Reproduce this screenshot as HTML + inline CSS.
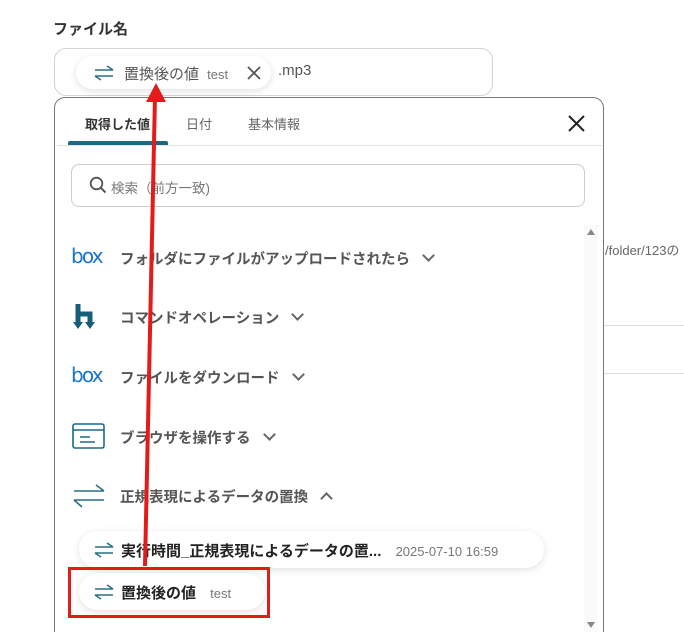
<html><head><style>
html,body{margin:0;width:684px;height:632px;overflow:hidden}
body{background:#fff;font-family:"Liberation Sans","Noto Sans CJK JP",sans-serif;position:relative}
.a{position:absolute}
.t{color:#555;font-size:14.5px;font-weight:bold;white-space:nowrap}
.chev{display:inline-block;width:7px;height:7px;border-right:2px solid #666;border-bottom:2px solid #666;transform:rotate(45deg);margin-left:14px;position:relative;top:-4px}
.chip{background:#fff;border-radius:20px;box-shadow:0 2px 8px rgba(0,0,0,.12)}
.box{font-size:20px;color:#1a76c8;letter-spacing:-1.8px;font-family:"DejaVu Sans",sans-serif}
</style></head><body>
<div class="a" style="left:53px;top:18px;font-size:15px;font-weight:bold;color:#333">ファイル名</div>
<div class="a" style="left:54px;top:48px;width:439px;height:48px;border:1px solid #d4d4d8;border-radius:12px;box-sizing:border-box"></div>
<div class="a chip" style="left:76px;top:56px;width:195px;height:33px"></div>
<svg class="a" style="left:93px;top:65px" width="22" height="16"><path d="M2 5H20M14 1L20 5M20 11H2M8 15L2 11" stroke="#2a6f86" stroke-width="1.5" fill="none"/></svg>
<div class="a" style="left:124px;top:63px;font-size:15px;color:#555">置換後の値 <span style="font-size:13px;color:#777;margin-left:4px">test</span></div>
<svg class="a" style="left:247px;top:66px" width="14" height="14"><path d="M1 1L13 13M13 1L1 13" stroke="#555" stroke-width="1.8"/></svg>
<div class="a" style="left:278px;top:62px;font-size:15px;color:#555">.mp3</div>

<div class="a" style="left:605px;top:240px;font-size:13px;color:#666;white-space:nowrap">/folder/123の</div>
<div class="a" style="left:604px;top:325px;width:80px;height:1px;background:#ddd"></div>
<div class="a" style="left:604px;top:373px;width:80px;height:1px;background:#ddd"></div>

<div class="a" style="left:54px;top:97px;width:550px;height:545px;border:1px solid #777;border-radius:11px;box-sizing:border-box;background:#fff"></div>
<div class="a" style="left:85px;top:114px;font-size:13px;font-weight:bold;color:#333">取得した値</div>
<div class="a" style="left:186px;top:114px;font-size:13px;color:#666">日付</div>
<div class="a" style="left:248px;top:114px;font-size:13px;color:#666">基本情報</div>
<div class="a" style="left:68px;top:141px;width:100px;height:4px;background:#1b6a83;border-radius:2px 2px 0 0"></div>
<div class="a" style="left:57px;top:145px;width:545px;height:1px;background:#e3e3e3"></div>
<svg class="a" style="left:568px;top:115px" width="17" height="17"><path d="M1 1L16 16M16 1L1 16" stroke="#222" stroke-width="2"/></svg>
<div class="a" style="left:71px;top:164px;width:514px;height:43px;border:1px solid #ccc;border-radius:8px;box-sizing:border-box"></div>
<svg class="a" style="left:89px;top:176px" width="18" height="18"><circle cx="7.5" cy="7.5" r="5.8" stroke="#555" stroke-width="1.8" fill="none"/><path d="M12 12L16.5 16.5" stroke="#555" stroke-width="2"/></svg>
<div class="a" style="left:111px;top:177px;font-size:13.5px;color:#777">検索（前方一致)</div>
<div class="a" style="left:584px;top:225px;width:14px;height:407px;background:#fafafa"></div>
<div class="a" style="left:587px;top:229px;width:0;height:0;border:4px solid transparent;border-bottom:6px solid #888;border-top:0"></div>
<div class="a" style="left:587px;top:622px;width:0;height:0;border:4px solid transparent;border-top:6px solid #888;border-bottom:0"></div>

<div class="a box" style="left:71px;top:244px">box</div>
<div class="a t" style="left:120px;top:248px">フォルダにファイルがアップロードされたら<span class="chev"></span></div>
<svg class="a" style="left:72px;top:302px" width="30" height="30"><path d="M6 2V22M6 12H18V22" stroke="#165e77" stroke-width="5" fill="none"/><path d="M1 20L6 27L11 20ZM13 20L18 27L23 20Z" fill="#165e77"/></svg>
<div class="a t" style="left:120px;top:307px">コマンドオペレーション<span class="chev"></span></div>
<div class="a box" style="left:71px;top:363px">box</div>
<div class="a t" style="left:120px;top:367px">ファイルをダウンロード<span class="chev"></span></div>
<svg class="a" style="left:72px;top:423px" width="34" height="27"><rect x="1" y="1" width="31" height="24" rx="2" stroke="#1b6a83" stroke-width="1.6" fill="none"/><path d="M1 7H32M8 14H18M8 19H23" stroke="#1b6a83" stroke-width="1.5"/></svg>
<div class="a t" style="left:120px;top:427px">ブラウザを操作する<span class="chev"></span></div>
<svg class="a" style="left:72px;top:483px" width="34" height="26"><path d="M2 8H32M24 2L32 8M32 17H2M10 24L2 17" stroke="#2a6f86" stroke-width="1.6" fill="none"/></svg>
<div class="a t" style="left:120px;top:486px">正規表現によるデータの置換<span class="chev" style="transform:rotate(225deg);top:1px"></span></div>

<div class="a chip" style="left:79px;top:531px;width:465px;height:37px"></div>
<svg class="a" style="left:93px;top:542px" width="22" height="16"><path d="M2 5H20M14 1L20 5M20 11H2M8 15L2 11" stroke="#2a6f86" stroke-width="1.5" fill="none"/></svg>
<div class="a" style="left:121px;top:540px;font-size:15px;font-weight:bold;color:#222;white-space:nowrap">実行時間_正規表現によるデータの置... <span style="font-size:13px;font-weight:normal;color:#777;margin-left:10px">2025-07-10 16:59</span></div>
<div class="a chip" style="left:79px;top:573px;width:186px;height:37px"></div>
<svg class="a" style="left:93px;top:584px" width="22" height="16"><path d="M2 5H20M14 1L20 5M20 11H2M8 15L2 11" stroke="#2a6f86" stroke-width="1.5" fill="none"/></svg>
<div class="a" style="left:121px;top:582px;font-size:15px;font-weight:bold;color:#222">置換後の値 <span style="font-size:13px;font-weight:normal;color:#777;margin-left:10px">test</span></div>
<div class="a" style="left:68px;top:567px;width:202px;height:51px;border:3.5px solid #e31b1b;box-sizing:border-box"></div>
<svg class="a" style="left:0;top:0" width="684" height="632"><path d="M145 566L155 96" stroke="#e31b1b" stroke-width="4"/><path d="M156 83L146 102L166 102Z" fill="#e31b1b"/></svg>
</body></html>
